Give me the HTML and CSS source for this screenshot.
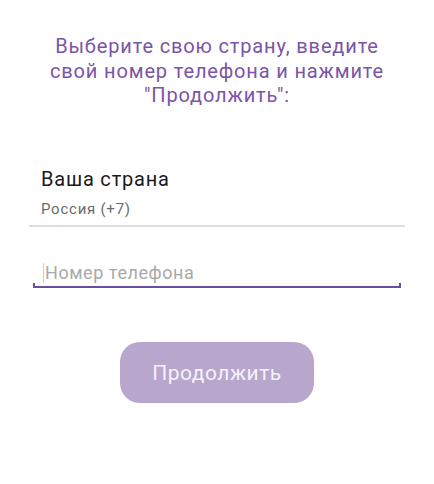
FILE: index.html
```html
<!DOCTYPE html>
<html lang="ru">
<head>
<meta charset="utf-8">
<link rel="stylesheet" href="styles.css">
</head>
<body>
<main class="screen">
  <p class="title">Выберите свою страну, введите<br>свой номер телефона и нажмите<br>"Продолжить":</p>
  <div class="country">
    <div class="country-label">Ваша страна</div>
    <div class="country-value">Россия (+7)</div>
  </div>
  <div class="phone">
    <span class="cursor"></span>
    <span class="placeholder">Номер телефона</span>
  </div>
  <div class="actions">
    <button class="continue" type="button">Продолжить</button>
  </div>
</main>
</body>
</html>
```

FILE: styles.css
```css
html, body {
  margin: 0;
  padding: 0;
  background: #ffffff;
}
body {
  font-family: Roboto, "Noto Sans", "Liberation Sans", sans-serif;
  width: 434px;
  height: 484px;
  overflow: hidden;
}
.screen {
  display: flex;
  flex-direction: column;
}
.title {
  margin: 34px 0 0;
  text-align: center;
  font-size: 20px;
  line-height: 24.5px;
  letter-spacing: 0.85px;
  color: #7a55a8;
}
.country {
  margin: 60.5px 29px 0;
  padding: 0 0 7px 12px;
  border-bottom: 2px solid #dcdcdc;
}
.country-label {
  font-size: 20px;
  line-height: 22px;
  letter-spacing: 0.8px;
  color: #1a1a1a;
}
.country-value {
  margin-top: 11px;
  font-size: 15px;
  line-height: 17px;
  letter-spacing: 0.75px;
  color: #6b6b6b;
}
.phone {
  position: relative;
  margin: 35px 33px 0;
  padding: 0 0 5px 10px;
  display: flex;
  align-items: center;
}
.phone::after {
  content: "";
  position: absolute;
  left: 0;
  right: 0;
  bottom: 0;
  height: 3px;
  border: 2px solid #6b4f9f;
  border-top: none;
}
.cursor {
  width: 1px;
  height: 20px;
  background: #d0d0d0;
  margin-right: 1px;
}
.placeholder {
  font-size: 18px;
  line-height: 21px;
  letter-spacing: 0.55px;
  color: #a9a9a9;
}
.actions {
  display: flex;
  justify-content: center;
  margin-top: 54px;
}
.continue {
  width: 194px;
  height: 61px;
  border: none;
  border-radius: 20px;
  background: #b9a6cd;
  color: #f6f2fa;
  font-family: inherit;
  font-size: 21px;
  letter-spacing: 0.5px;
  padding: 0;
}
```
